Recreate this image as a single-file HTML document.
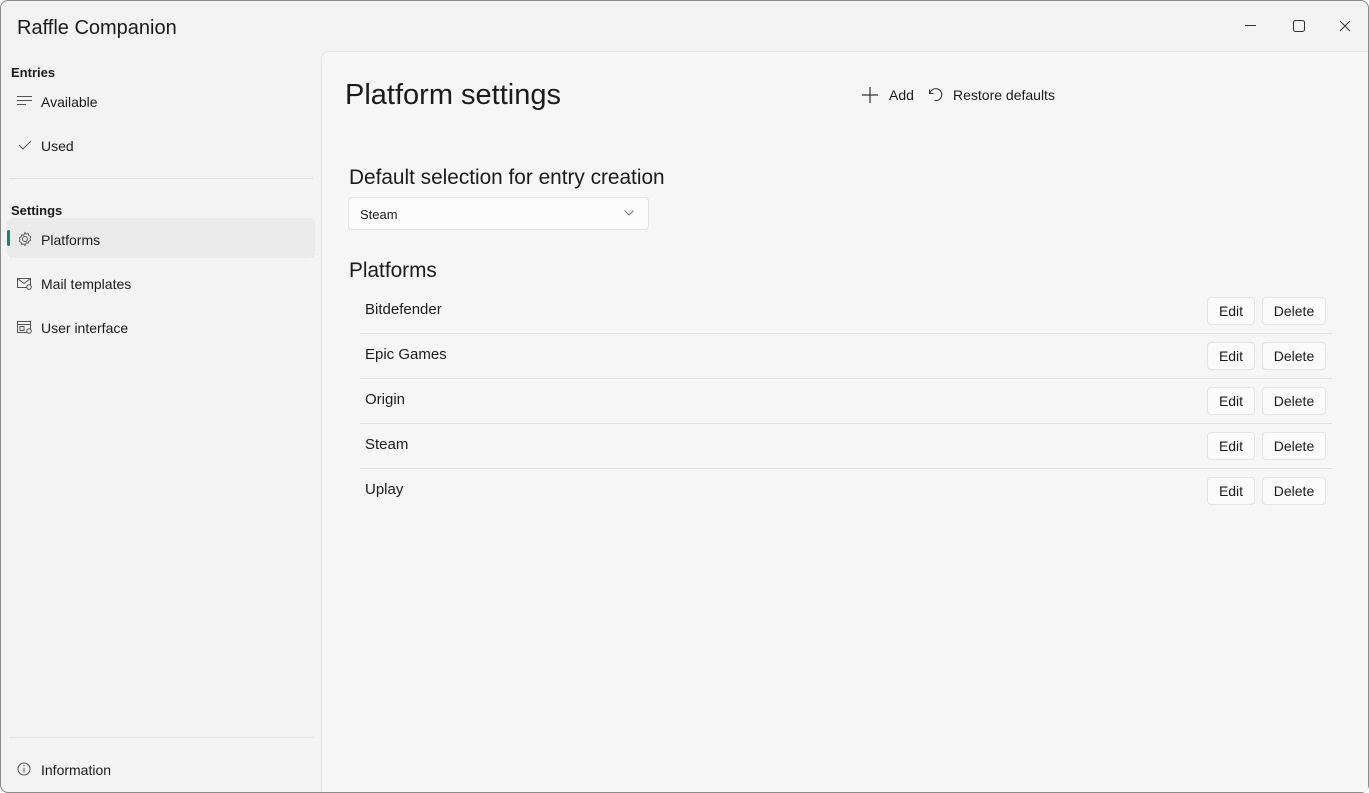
<!DOCTYPE html>
<html><head><meta charset="utf-8"><style>
*{margin:0;padding:0;box-sizing:border-box}
body{width:1369px;height:793px;overflow:hidden;font-family:"Liberation Sans",sans-serif;color:#1b1b1b;background:#fff}
.win{position:absolute;left:0;top:0;width:1369px;height:793px;background:#f3f3f3;box-shadow:inset 0 0 0 1px #8a8a8a;border-radius:8px;overflow:hidden}
.abs{position:absolute;white-space:nowrap}
.title{left:17px;top:17px;font-size:20px}
.cap{font-size:13px;font-weight:bold;color:#1b1b1b}
.nav{font-size:14px;left:41px}
.content{position:absolute;left:321px;top:51px;width:1047px;height:741px;background:#f6f6f6;border-left:1px solid #e5e5e5;border-top:1px solid #e5e5e5;border-top-left-radius:8px}
.sep{position:absolute;height:1px;background:#e0e0e0}
.btn{position:absolute;height:28px;border:1px solid #e5e5e5;border-radius:4px;background:#fbfbfb;font-size:14px;text-align:center;line-height:26px}
.row{font-size:15px;left:365px}
svg{position:absolute}
</style></head><body><div class="win">
<div class="abs title">Raffle Companion</div>
<svg style="left:1245px;top:25px" width="12" height="2"><rect width="11" height="1" fill="#333"/></svg>
<svg style="left:1293px;top:20px" width="13" height="13"><rect x=".5" y=".5" width="11" height="11" rx="2" fill="none" stroke="#333"/></svg>
<svg style="left:1339px;top:20px" width="12" height="12"><path d="M1 1L11 11M11 1L1 11" stroke="#333"/></svg>

<div class="abs cap" style="left:11px;top:65px">Entries</div>
<svg style="left:17px;top:95px" width="16" height="12"><path d="M0 1.5h15M0 5.5h15M0 9.5h9" stroke="#555"/></svg>
<div class="abs nav" style="top:94px">Available</div>
<svg style="left:18px;top:140px" width="14" height="10"><path d="M1 5l4 4 8-8" stroke="#555" fill="none"/></svg>
<div class="abs nav" style="top:138px">Used</div>
<div class="sep" style="left:9px;top:178px;width:304px"></div>
<div class="abs cap" style="left:11px;top:203px">Settings</div>
<div style="position:absolute;left:7px;top:218px;width:308px;height:40px;background:#eaeaea;border-radius:5px"></div>
<div style="position:absolute;left:7px;top:230px;width:3px;height:16px;background:#0f8a72;border-radius:2px"></div>
<svg style="left:17px;top:231px" width="16" height="16" viewBox="0 0 16 16"><circle cx="8" cy="8" r="2.5" fill="none" stroke="#555"/><path d="M8 1.5l1.3 1.6 2-.5.5 2 1.9.9-.7 1.9.7 1.9-1.9.9-.5 2-2-.5L8 14.5l-1.3-1.6-2 .5-.5-2-1.9-.9.7-1.9-.7-1.9 1.9-.9.5-2 2 .5z" fill="none" stroke="#555" stroke-width=".9"/></svg>
<div class="abs nav" style="top:232px">Platforms</div>
<svg style="left:17px;top:277px" width="16" height="14"><rect x=".5" y="1.5" width="13" height="9" fill="none" stroke="#555"/><path d="M.5 1.5l6.5 5 6.5-5" fill="none" stroke="#555"/><circle cx="12" cy="10" r="2.3" fill="#f3f3f3" stroke="#555"/></svg>
<div class="abs nav" style="top:276px">Mail templates</div>
<svg style="left:17px;top:321px" width="16" height="14"><rect x=".5" y=".5" width="13" height="11" fill="none" stroke="#555"/><path d="M.5 3.5h13M3 5.5h4v4H3z" fill="none" stroke="#555"/><circle cx="12" cy="10" r="2.3" fill="#f3f3f3" stroke="#555"/></svg>
<div class="abs nav" style="top:320px">User interface</div>
<div class="sep" style="left:9px;top:737px;width:304px"></div>
<svg style="left:17px;top:762px" width="14" height="14"><circle cx="7" cy="7" r="6" fill="none" stroke="#555"/><path d="M7 6v4.5" stroke="#555"/><circle cx="7" cy="4" r=".7" fill="#555"/></svg>
<div class="abs nav" style="top:762px">Information</div>

<div class="content"></div>
<div class="abs" style="left:345px;top:79px;font-size:29px">Platform settings</div>
<svg style="left:861px;top:86px" width="18" height="18"><path d="M9 1v16M1 9h16" stroke="#333" stroke-width="1.2"/></svg>
<div class="abs" style="left:889px;top:87px;font-size:14px">Add</div>
<svg style="left:926px;top:86px" width="17" height="17" viewBox="0 0 17 17"><path d="M3.5 3.5v4h4" fill="none" stroke="#333"/><path d="M4 7A6 6 0 1 1 8.5 14.5" fill="none" stroke="#333"/></svg>
<div class="abs" style="left:953px;top:87px;font-size:14px">Restore defaults</div>

<div class="abs" style="left:349px;top:166px;font-size:20.8px">Default selection for entry creation</div>
<div style="position:absolute;left:348px;top:197px;width:301px;height:33px;background:#fcfcfc;border:1px solid #e5e5e5;border-radius:4px"></div>
<div class="abs" style="left:360px;top:207px;font-size:13px">Steam</div>
<svg style="left:624px;top:210px" width="10" height="6"><path d="M.5 .5l4.5 4.5 4.5-4.5" fill="none" stroke="#777"/></svg>
<div class="abs" style="left:349px;top:259px;font-size:20.8px">Platforms</div>

<div class="abs row" style="top:301px">Bitdefender</div>
<div class="abs row" style="top:346px">Epic Games</div>
<div class="abs row" style="top:391px">Origin</div>
<div class="abs row" style="top:436px">Steam</div>
<div class="abs row" style="top:481px">Uplay</div>
<div class="sep" style="left:360px;top:333px;width:972px"></div>
<div class="sep" style="left:360px;top:378px;width:972px"></div>
<div class="sep" style="left:360px;top:423px;width:972px"></div>
<div class="sep" style="left:360px;top:468px;width:972px"></div>

<div class="btn" style="left:1207px;top:297px;width:48px">Edit</div><div class="btn" style="left:1262px;top:297px;width:64px">Delete</div>
<div class="btn" style="left:1207px;top:342px;width:48px">Edit</div><div class="btn" style="left:1262px;top:342px;width:64px">Delete</div>
<div class="btn" style="left:1207px;top:387px;width:48px">Edit</div><div class="btn" style="left:1262px;top:387px;width:64px">Delete</div>
<div class="btn" style="left:1207px;top:432px;width:48px">Edit</div><div class="btn" style="left:1262px;top:432px;width:64px">Delete</div>
<div class="btn" style="left:1207px;top:477px;width:48px">Edit</div><div class="btn" style="left:1262px;top:477px;width:64px">Delete</div>
</div></body></html>
